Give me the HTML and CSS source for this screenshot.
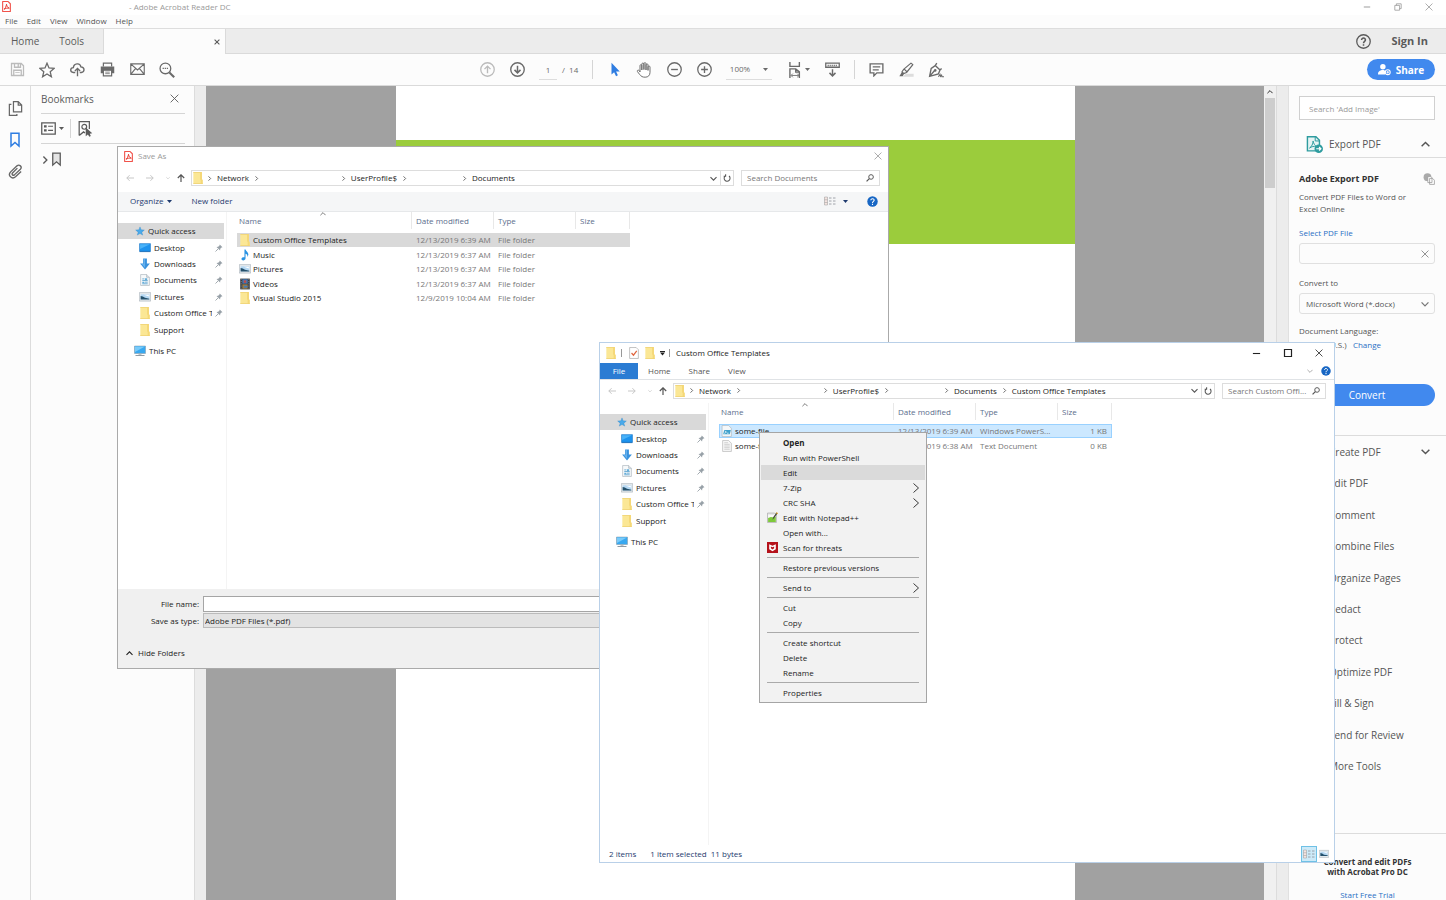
FILE: index.html
```html
<!DOCTYPE html>
<html lang="en">
<head>
  <meta charset="UTF-8" />
  <meta name="viewport" content="width=device-width, initial-scale=1" />
  <title>Adobe Acrobat Reader DC</title>
  <link rel="stylesheet" href="styles.css">
</head>
<body>

  <!-- icon sprite -->
  <svg class="sprite" aria-hidden="true">
    <symbol id="i-pdf" viewBox="0 0 18 20"><path d="M2 1h10l4 4v14H2z" fill="#fff" stroke="#f0524a" stroke-width="2" stroke-linejoin="round"/><path d="M4.500 15c2-1 4-5 4.500-9 .5 3 2 6 5 7-3-.5-7 .3-9.500 2z" fill="none" stroke="#e5352b" stroke-width="1.800"/></symbol>
    <symbol id="i-save" viewBox="0 0 20 20"><path d="M2 2h13l3 3v13H2zM6 2v5h8V2M5 18v-7h10v7M11 3v3" fill="none" stroke="#bbb" stroke-width="1.700"/><path d="M7 14h6" stroke="#bbb"/></symbol>
    <symbol id="i-star" viewBox="0 0 20 20"><path d="M10 1.500l2.500 6 6.300.5-4.800 4.200 1.500 6.300L10 15.100l-5.500 3.400L6 12.200 1.200 8l6.300-.5z" fill="none" stroke="currentColor" stroke-width="1.600"/></symbol>
    <symbol id="i-cloud" viewBox="0 0 20 20"><path d="M7 14H4.500C-.5 13.500 0 7.500 4.500 7.500 5 1.500 13.500.5 14.500 6.500c5.500.5 5.500 7 .5 7.500h-2M10 19V9M6.500 12L10 8.500l3.500 3.500" fill="none" stroke="currentColor" stroke-width="1.800"/></symbol>
    <symbol id="i-print" viewBox="0 0 20 20"><path d="M4.500 6V1.500h11V6" fill="none" stroke="currentColor" stroke-width="1.600"/><path d="M1 6h18v9h-3v-4H4v4H1z" fill="currentColor"/><path d="M4.500 11h11v7.500h-11z" fill="none" stroke="currentColor" stroke-width="1.600"/><path d="M7 13.500h6M7 15.500h6" stroke="currentColor"/></symbol>
    <symbol id="i-mail" viewBox="0 0 20 20"><path d="M1 2.500h18v14H1zM1 2.500l9 8 9-8M1 16.500l6.500-8M19 16.500l-6.500-8" fill="none" stroke="currentColor" stroke-width="1.500"/></symbol>
    <symbol id="i-find" viewBox="0 0 20 20"><circle cx="8" cy="8" r="6.700" fill="none" stroke="currentColor" stroke-width="1.600"/><path d="M13 13l6 6" stroke="currentColor" stroke-width="2.600"/><path d="M4.500 8h7" stroke="currentColor" stroke-width="1.600" stroke-dasharray="1.600 1"/></symbol>
    <symbol id="i-up" viewBox="0 0 20 20"><circle cx="10" cy="10" r="9" fill="none" stroke="#bbb" stroke-width="1.700"/><path d="M10 15V6M6 9.500l4-4 4 4" fill="none" stroke="#bbb" stroke-width="1.800"/></symbol>
    <symbol id="i-down" viewBox="0 0 20 20"><circle cx="10" cy="10" r="9" fill="none" stroke="currentColor" stroke-width="1.800"/><path d="M10 5v9M6 10.500l4 4 4-4" fill="none" stroke="currentColor" stroke-width="2"/></symbol>
    <symbol id="i-cursor" viewBox="0 0 20 20"><path d="M6 1v15.500l3.500-3 2.600 5.500 2.400-1.200-2.400-5.300H17z" fill="#2f7de1"/></symbol>
    <symbol id="i-hand" viewBox="0 0 20 20"><path d="M5 12.500V4.500c0-1.500 2.200-1.500 2.300 0V10 2.500c0-1.600 2.600-1.600 2.600 0V9.500 2c.1-1.600 2.600-1.500 2.600 0v8-6.500c.1-1.500 2.500-1.500 2.500 0V10.500 6c.2-1.400 2.500-1.400 2.500.3V13c0 3.500-2.200 6-6 6-3.500 0-5-1-7-3.500L1.800 12c-.8-1.500 1-2.500 2.200-1.300z" fill="#fff" stroke="currentColor" stroke-width="1.200" stroke-linejoin="round"/></symbol>
    <symbol id="i-minus" viewBox="0 0 20 20"><circle cx="10" cy="10" r="9" fill="none" stroke="currentColor" stroke-width="1.700"/><path d="M5.500 10h9" stroke="currentColor" stroke-width="1.800"/></symbol>
    <symbol id="i-plus" viewBox="0 0 20 20"><circle cx="10" cy="10" r="9" fill="none" stroke="currentColor" stroke-width="1.700"/><path d="M5.500 10h9M10 5.500v9" stroke="currentColor" stroke-width="1.800"/></symbol>
    <symbol id="i-fit" viewBox="0 0 20 22"><path d="M3 0v6h13V0M3 22V9.500h8l5 4V22M11 10v4h4" fill="none" stroke="currentColor" stroke-width="1.900"/><path d="M5 18.500h10M7 16l-2.500 2.500L7 21M13 16l2.500 2.500L13 21" fill="none" stroke="currentColor" stroke-width="1.200"/></symbol>
    <symbol id="i-read" viewBox="0 0 20 20"><path d="M1 1.500h18v5.500H1z" fill="none" stroke="currentColor" stroke-width="1.700"/><path d="M3.500 4.500h13" stroke="currentColor" stroke-width="2" stroke-dasharray="1.500 1.200"/><path d="M10 9.500v9M6 14.500l4 4 4-4" fill="none" stroke="currentColor" stroke-width="1.900"/></symbol>
    <symbol id="i-comment" viewBox="0 0 20 20"><path d="M1.500 2.500h17v12h-8l-4 4v-4h-5z" fill="none" stroke="currentColor" stroke-width="1.800"/><path d="M5 6.500h10M5 10.500h8" stroke="currentColor" stroke-width="1.500"/></symbol>
    <symbol id="i-marker" viewBox="0 0 20 20"><path d="M9 15.500h10.500v4H5z" fill="#ddd"/><path d="M16 1.500l2.500 2L10 14l-4 1.500L4 13l2.500-3.500zM7 9.500l3.500 3.500" fill="none" stroke="currentColor" stroke-width="1.600" stroke-linejoin="round"/><path d="M4 13l-3.500 6H5l2-4z" fill="currentColor"/></symbol>
    <symbol id="i-sign" viewBox="0 0 20 20"><path d="M9 4.500l6 5.500-2 5-11 3L4 8zM9 4.500l2-3M2 18l6-7M15 10l2-2" fill="none" stroke="currentColor" stroke-width="1.700"/><circle cx="9" cy="10.500" r="1.600" fill="currentColor"/><path d="M13 18.500l2-3 .6 2.500 1.400-1.500.5 2H20" fill="none" stroke="currentColor" stroke-width="1.400"/></symbol>
    <symbol id="i-tri" viewBox="0 0 10 6"><path d="M0 0h10L5 6z" fill="currentColor"/></symbol>
    <symbol id="i-x" viewBox="0 0 10 10"><path d="M.7.7l8.600 8.600M9.300.7L.7 9.300" stroke="currentColor" fill="none"/></symbol>
    <symbol id="i-xbold" viewBox="0 0 10 10"><path d="M1 1l8 8M9 1L1 9" stroke="currentColor" stroke-width="1.800" fill="none"/></symbol>
    <symbol id="i-line" viewBox="0 0 10 10"><path d="M1 5h8" stroke="currentColor" stroke-width="1.200"/></symbol>
    <symbol id="i-restore" viewBox="0 0 10 10"><path d="M1 3h6v6H1zM3 3V1h6v6H7" fill="none" stroke="currentColor"/></symbol>
    <symbol id="i-max" viewBox="0 0 10 10"><path d="M1.500 1.500h7v7h-7z" fill="none" stroke="currentColor" stroke-width="1.200"/></symbol>
    <symbol id="i-chev-r" viewBox="0 0 10 10"><path d="M3 .7L7.300 5 3 9.300" fill="none" stroke="currentColor" stroke-width="1.700"/></symbol>
    <symbol id="i-more" viewBox="0 0 10 10"><path d="M2.500 .5L7.500 5l-5 4.500" fill="none" stroke="currentColor" stroke-width=".9"/></symbol>
    <symbol id="i-chev-d" viewBox="0 0 10 10"><path d="M.7 3L5 7.300 9.300 3" fill="none" stroke="currentColor" stroke-width="1.600"/></symbol>
    <symbol id="i-chev-u" viewBox="0 0 10 10"><path d="M.7 7L5 2.700 9.300 7" fill="none" stroke="currentColor" stroke-width="1.600"/></symbol>
    <symbol id="i-arr-l" viewBox="0 0 10 10"><path d="M10 5H1M4.500 1.500L1 5l3.500 3.500" fill="none" stroke="currentColor" stroke-width="1.200"/></symbol>
    <symbol id="i-arr-r" viewBox="0 0 10 10"><path d="M0 5h9M5.500 1.500L9 5 5.500 8.500" fill="none" stroke="currentColor" stroke-width="1.200"/></symbol>
    <symbol id="i-arr-u" viewBox="0 0 10 10"><path d="M5 10V1M1 5l4-4 4 4" fill="none" stroke="currentColor" stroke-width="1.500"/></symbol>
    <symbol id="i-refresh" viewBox="0 0 10 10"><path d="M7.500 2.500A3.700 3.700 0 1 1 3 2.300M3.300.3v2.500H.8" fill="none" stroke="currentColor" stroke-width="1.300"/></symbol>
    <symbol id="i-lens" viewBox="0 0 10 10"><circle cx="6.300" cy="3.700" r="2.900" fill="none" stroke="currentColor" stroke-width="1.200"/><path d="M4.200 5.800L.7 9.300" stroke="currentColor" stroke-width="1.500"/></symbol>
    <symbol id="i-help" viewBox="0 0 20 20"><circle cx="10" cy="10" r="9.500" fill="#1766c4"/><path d="M7 7.800c0-4 6.200-3.600 6 0-.1 2-3 2.200-3 4.700M10 14v2.400" fill="none" stroke="#fff" stroke-width="2"/></symbol>
    <symbol id="i-helpline" viewBox="0 0 20 20"><circle cx="10" cy="10" r="9" fill="none" stroke="currentColor" stroke-width="1.700"/><path d="M7.400 8c0-3.500 5.300-3.200 5.200 0-.1 1.800-2.600 2-2.600 4.200M10 13.600v2" fill="none" stroke="currentColor" stroke-width="2"/></symbol>
    <symbol id="i-person" viewBox="0 0 24 22"><circle cx="9" cy="6" r="5" fill="#fff"/><path d="M0 20c0-6 4-7 7-8h4l3 2-1 6z" fill="#fff"/><circle cx="18" cy="16" r="4.500" fill="none" stroke="#fff" stroke-width="2"/><path d="M15.500 16h5M18 13.500v5" stroke="#fff" stroke-width="1.600"/></symbol>
    <symbol id="i-pages" viewBox="0 0 20 22"><path d="M7 1h7l5 5v10H7zM14 1v5h5M4 5H1v16h11v-2" fill="none" stroke="currentColor" stroke-width="1.800"/></symbol>
    <symbol id="i-mark" viewBox="0 0 14 20"><path d="M2 1.500h10v16l-5-4.500-5 4.500z" fill="none" stroke="currentColor" stroke-width="1.900"/></symbol>
    <symbol id="i-node" viewBox="0 0 14 20"><path d="M2 1.500h10v16l-5-4.500-5 4.500z" fill="#e4e4e4" stroke="currentColor" stroke-width="1.700"/></symbol>
    <symbol id="i-clip" viewBox="0 0 20 20"><path d="M12.500 5.500L6 12c-1.500 2 .8 4 2.500 2.500L16.500 7c3-3.500-1.500-7-4.500-4.500L3.500 10.500c-4.500 5 2 10.500 6.500 6.500l7.500-7" fill="none" stroke="currentColor" stroke-width="1.800"/></symbol>
    <symbol id="i-options" viewBox="0 0 20 18"><path d="M1 1.500h18v15H1z" fill="none" stroke="currentColor" stroke-width="1.700"/><path d="M4 6h3.500M4 11.500h3.500" stroke="currentColor" stroke-width="3"/><path d="M9.500 6H16M9.500 11.500H16" stroke="currentColor" stroke-width="1.600"/></symbol>
    <symbol id="i-findmark" viewBox="0 0 20 22"><path d="M2 20V1h14v10M2 20l6-5 2 1.500" fill="none" stroke="currentColor" stroke-width="1.700"/><circle cx="9" cy="8" r="3.300" fill="none" stroke="currentColor" stroke-width="1.600"/><path d="M11 9v12l3-2.500 2 3 2-1-1.500-3L20 17z" fill="currentColor"/></symbol>
    <symbol id="i-export" viewBox="0 0 24 24"><path d="M2 1h12l5 5v15H2z" fill="#e6f4f4" stroke="#2e9c9f" stroke-width="2"/><path d="M13 1v6h6M5 17c3-2 5-6 5-10 1 4 2 6 5 8-4-1-7 0-10 2z" fill="none" stroke="#2e9c9f" stroke-width="1.400"/><circle cx="18" cy="18" r="6" fill="#2e9c9f"/><path d="M14.500 18h6M18.500 15.500L21 18l-2.500 2.500" fill="none" stroke="#fff" stroke-width="1.700"/></symbol>
    <symbol id="i-cloudpages" viewBox="0 0 20 20"><circle cx="7.500" cy="7" r="6.500" fill="#aaa"/><path d="M8 6h5l2 2v8H8zM11 9h5l3 3v7h-8z" fill="#fff" stroke="#999" stroke-width="1.300"/></symbol>
    <symbol id="i-folder" viewBox="1 1 14 18"><path d="M1 1h13v11l1 1v6H1z" fill="#fbe795"/><path d="M14 2v10l1 1.500V19h-3v-6l-1-1V1h3z" fill="#f5d878"/><path d="M1 1h11v1H1zM1 18h14v1H1z" fill="#efd274"/></symbol>
    <symbol id="i-quick" viewBox="-1 -1 22 22"><path d="M10 1l2.500 6.500 7 .5-5.500 4.500 2 6.500-6-3.500L4 19l2-6.500L.5 8l7-.5z" fill="#4aaaea" stroke="#2f87cb" stroke-width=".8"/></symbol>
    <symbol id="i-desktop" viewBox="0 0 22 18"><path d="M1 1h20v14H1z" fill="#1d93ee" stroke="#1271c4"/><path d="M2 2h18L2 11z" fill="#49b2f8"/><path d="M1 15h20v1.500H1z" fill="#0d65b4"/></symbol>
    <symbol id="i-dl" viewBox="0 0 20 22"><path d="M6.500 1h7v9H19l-9 11L1 10h5.500z" fill="#3a93de"/><path d="M7.500 2H10v16L4 11h3.500z" fill="#65b0ec"/></symbol>
    <symbol id="i-doc" viewBox="0 0 18 22"><path d="M1 1h11l5 5v15H1z" fill="#f7f9fa" stroke="#9aa5ad"/><path d="M12 1v5h5" fill="#dde3e7" stroke="#9aa5ad"/><path d="M4 9h4M4 12h10M9 15h5M4 18h10" stroke="#4e9ccb" stroke-width="1.500"/><path d="M4 14h4v3H4zM9 8h4v3H9z" fill="#63aeda"/></symbol>
    <symbol id="i-pic" viewBox="0 0 22 18"><path d="M.5 1h21v15.500H.5z" fill="#e8ecef" stroke="#98a3ab"/><path d="M3 4h16v9.500H3z" fill="#b5d8f3"/><path d="M3 7l4 1 4 2.500 8 1.500v1.500H3z" fill="#24506b"/><path d="M9 5h9v3z" fill="#fff"/></symbol>
    <symbol id="i-music" viewBox="0 0 16 22"><path d="M7 1h2c1 4 6 5 5 10-.3 1.500-1 2.500-2 3.500 1-4-.5-5.500-3-6V17c0 5-8 5-7.500 1 .3-2.500 3-3.500 5.500-2.700z" fill="#2a93e3"/></symbol>
    <symbol id="i-video" viewBox="0 0 20 20"><path d="M2 1h16v18H2z" fill="#34383c"/><path d="M5.500 2h9v7.500h-9z" fill="#4478b4"/><path d="M5.500 10.500h9V18h-9z" fill="#9a7c45"/><path d="M8 4h4v4H8z" fill="#c14a43"/><path d="M8 13h6v3H8z" fill="#3e79bd"/><path d="M3.700 2v16M16.300 2v16" stroke="#bbb" stroke-width="1" stroke-dasharray="1.500 1.500"/></symbol>
    <symbol id="i-pc" viewBox="0 0 24 22"><path d="M1 1h22v15H1z" fill="#38a8f0" stroke="#8494a0"/><path d="M2 2h20L2 13z" fill="#79cbfa"/><path d="M9 16h6v2.500H9z" fill="#a7b0b7"/><path d="M3 20h18" stroke="#8f9ba4" stroke-width="2"/></symbol>
    <symbol id="i-pin" viewBox="0 0 16 16"><path d="M9.500 1L15 6.500l-2 .6-2.500 2.500-.3 3.400L3 5.800l3.400-.3L9 3z" fill="#98a1a8"/><path d="M6 10l-5 5" stroke="#98a1a8" stroke-width="1.800"/></symbol>
    <symbol id="i-ps" viewBox="0 0 20 22"><path d="M1 1h12l5 5v15H1z" fill="#f5f8fa" stroke="#a0aab0"/><path d="M5 9h12l-2 8H3z" fill="#3fa1cc"/><path d="M6 11l3 2-4 2.500M10 15h3" fill="none" stroke="#fff" stroke-width="1.300"/></symbol>
    <symbol id="i-txt" viewBox="0 0 18 22"><path d="M1 1h11l5 5v15H1z" fill="#f7f7f7" stroke="#a5a5a5"/><path d="M4 5h7M4 8h10M4 11h10M4 14h10M4 17h10" stroke="#b4b4b4"/></symbol>
    <symbol id="i-check" viewBox="0 0 18 22"><path d="M1 1h12l4 4v16H1z" fill="#fff" stroke="#909090"/><path d="M4.500 11l3.500 4 6-8" fill="none" stroke="#e0643c" stroke-width="2.200"/></symbol>
    <symbol id="i-npp" viewBox="0 0 20 20"><path d="M1 2h13l3 3v14H1z" fill="#fafafa" stroke="#8b8b8b"/><path d="M2 11l5-2 5 1 4-2v10H2z" fill="#7ec93b"/><path d="M3 4h9" stroke="#999" stroke-dasharray="1 1"/><path d="M10 14l1-4 6-9 2 1.500-6 8.500z" fill="#4a4a3d"/><path d="M16 2l1-1.500 3 1.500-1 2z" fill="#e2a72e"/></symbol>
    <symbol id="i-shield" viewBox="0 0 20 20"><path d="M0 0h20v20H0z" fill="#b5121b"/><path d="M4 4l6 3 6-3v9l-6 4-6-4z" fill="#fff"/><path d="M7 8l3 1.500L13 8v3.500l-3 2-3-2z" fill="#b5121b"/></symbol>
    <symbol id="i-views" viewBox="0 0 24 18"><path d="M1 1h6v16H1zM1 6.500h6M1 12h6" fill="#f4e3e0" stroke="#999"/><path d="M10 3h5M18 3h5M10 9h5M18 9h5M10 15h5M18 15h5" stroke="#8a9097" stroke-width="1.600"/></symbol>
  </svg>

  <header class="titlebar">
    <svg class="ic11"><use href="#i-pdf"/></svg>
    <span class="app-title">- Adobe Acrobat Reader DC</span>
    <div class="caption">
      <button aria-label="Minimize"><svg class="ic8"><use href="#i-line"/></svg></button>
      <button aria-label="Restore"><svg class="ic8"><use href="#i-restore"/></svg></button>
      <button aria-label="Close"><svg class="ic8"><use href="#i-x"/></svg></button>
    </div>
  </header>

  <nav class="menubar">
    <button>File</button><button>Edit</button><button>View</button><button>Window</button><button>Help</button>
  </nav>

  <div class="tabbar">
    <button class="tab home">Home</button>
    <button class="tab">Tools</button>
    <div class="tab-doc"><button aria-label="Close tab"><svg class="ic6"><use href="#i-xbold"/></svg></button></div>
    <div class="account">
      <button aria-label="Help"><svg class="ic15"><use href="#i-helpline"/></svg></button>
      <button class="sign-in">Sign In</button>
    </div>
  </div>

  <div class="toolbar">
    <button aria-label="Save"><svg class="ic15"><use href="#i-save"/></svg></button>
    <button aria-label="Star"><svg class="ic16"><use href="#i-star"/></svg></button>
    <button aria-label="Upload"><svg class="ic15"><use href="#i-cloud"/></svg></button>
    <button aria-label="Print"><svg class="ic15"><use href="#i-print"/></svg></button>
    <button aria-label="Email"><svg class="ic15"><use href="#i-mail"/></svg></button>
    <button aria-label="Find"><svg class="ic16"><use href="#i-find"/></svg></button>
    <div class="tool-mid">
      <button aria-label="Previous page"><svg class="ic15"><use href="#i-up"/></svg></button>
      <button aria-label="Next page"><svg class="ic15"><use href="#i-down"/></svg></button>
      <input class="page-no" type="text" value="1" aria-label="Page number">
      <span class="page-total">/&nbsp; 14</span>
      <span class="divider"></span>
      <button aria-label="Select"><svg class="ic15"><use href="#i-cursor"/></svg></button>
      <button aria-label="Pan"><svg class="ic16"><use href="#i-hand"/></svg></button>
      <button aria-label="Zoom out"><svg class="ic15"><use href="#i-minus"/></svg></button>
      <button aria-label="Zoom in"><svg class="ic15"><use href="#i-plus"/></svg></button>
      <button class="zoom">100% <svg class="tri"><use href="#i-tri"/></svg></button>
      <button class="fit" aria-label="Fit page"><svg class="ic16"><use href="#i-fit"/></svg><svg class="tri"><use href="#i-tri"/></svg></button>
      <button aria-label="Read mode"><svg class="ic15"><use href="#i-read"/></svg></button>
      <span class="divider"></span>
      <button aria-label="Comment"><svg class="ic15"><use href="#i-comment"/></svg></button>
      <button aria-label="Highlight"><svg class="ic15"><use href="#i-marker"/></svg></button>
      <button aria-label="Sign"><svg class="ic16"><use href="#i-sign"/></svg></button>
    </div>
    <button class="share"><svg class="ic13"><use href="#i-person"/></svg> Share</button>
  </div>

  <main class="workspace">
    <div class="rail">
      <button aria-label="Page thumbnails"><svg class="ic15"><use href="#i-pages"/></svg></button>
      <button class="on" aria-label="Bookmarks"><svg class="ic16"><use href="#i-mark"/></svg></button>
      <button aria-label="Attachments"><svg class="ic15"><use href="#i-clip"/></svg></button>
    </div>
    <aside class="bookmarks">
      <div class="bm-head"><h2>Bookmarks</h2><button aria-label="Close panel"><svg class="ic9"><use href="#i-x"/></svg></button></div>
      <div class="bm-tools">
        <button class="bm-options" aria-label="Options"><svg class="ic15"><use href="#i-options"/></svg><svg class="tri"><use href="#i-tri"/></svg></button>
        <button class="bm-find" aria-label="Find bookmark"><svg class="ic16"><use href="#i-findmark"/></svg></button>
      </div>
      <div class="bm-tree"><svg class="ic8"><use href="#i-chev-r"/></svg><svg class="ic15"><use href="#i-node"/></svg></div>
    </aside>
    <div class="splitter"></div>
    <section class="viewer"><div class="page"><div class="band"></div></div></section>
    <div class="scrollbar"><svg class="ic6"><use href="#i-chev-u"/></svg><span class="thumb"></span></div>
    <div class="splitter"></div>

    <aside class="tools">
      <input class="tool-search" type="text" placeholder="Search 'Add Image'" aria-label="Search tools">
      <button class="tool-head"><svg class="ic17"><use href="#i-export"/></svg>Export PDF<svg class="ic9 end"><use href="#i-chev-u"/></svg></button>
      <div class="export">
        <h3>Adobe Export PDF <svg class="ic12"><use href="#i-cloudpages"/></svg></h3>
        <p>Convert PDF Files to Word or<br>Excel Online</p>
        <label class="link" for="pdf-file">Select PDF File</label>
        <div class="field">
          <input id="pdf-file" type="text">
          <svg class="ic8"><use href="#i-x"/></svg>
        </div>
        <label for="convert-to">Convert to</label>
        <div class="field">
          <select id="convert-to"><option>Microsoft Word (*.docx)</option></select>
          <svg class="ic8"><use href="#i-chev-d"/></svg>
        </div>
        <p class="lang">Document Language:<br>English (U.S.) &nbsp; <a class="link" href="#">Change</a></p>
        <button class="convert">Convert</button>
      </div>
      <ul class="tool-list">
        <li>Create PDF <svg class="ic9 end"><use href="#i-chev-d"/></svg></li>
        <li>Edit PDF</li>
        <li>Comment</li>
        <li>Combine Files</li>
        <li>Organize Pages</li>
        <li>Redact</li>
        <li>Protect</li>
        <li>Optimize PDF</li>
        <li>Fill &amp; Sign</li>
        <li>Send for Review</li>
        <li>More Tools</li>
      </ul>
      <div class="promo">
        <strong>Convert and edit PDFs<br>with Acrobat Pro DC</strong>
        <a class="link" href="#">Start Free Trial</a>
      </div>
    </aside>
  </main>

  <!-- Save As dialog -->
  <section class="window save-as">
    <div class="save-title">
      <svg class="ic11"><use href="#i-pdf"/></svg> Save As
      <button class="end" aria-label="Close"><svg class="ic8"><use href="#i-x"/></svg></button>
    </div>
    <div class="nav-row">
      <button class="dim" aria-label="Back"><svg class="ic8"><use href="#i-arr-l"/></svg></button>
      <button class="dim" aria-label="Forward"><svg class="ic8"><use href="#i-arr-r"/></svg></button>
      <button class="dim recent" aria-label="Recent"><svg class="ic4"><use href="#i-chev-d"/></svg></button>
      <button aria-label="Up"><svg class="ic8"><use href="#i-arr-u"/></svg></button>
      <div class="address">
        <svg class="ic12"><use href="#i-folder"/></svg>
        <svg class="sep"><use href="#i-chev-r"/></svg><span>Network</span>
        <svg class="sep"><use href="#i-chev-r"/></svg><span class="blank-wide"></span>
        <svg class="sep"><use href="#i-chev-r"/></svg><span>UserProfile$</span>
        <svg class="sep"><use href="#i-chev-r"/></svg><span class="blank"></span>
        <svg class="sep"><use href="#i-chev-r"/></svg><span>Documents</span>
        <svg class="ic7 end"><use href="#i-chev-d"/></svg>
        <button class="refresh" aria-label="Refresh"><svg class="ic8"><use href="#i-refresh"/></svg></button>
      </div>
      <div class="search"><input type="text" placeholder="Search Documents" aria-label="Search Documents"><svg class="ic8"><use href="#i-lens"/></svg></div>
    </div>
    <div class="commands">
      <button>Organize <svg class="tri"><use href="#i-tri"/></svg></button>
      <button>New folder</button>
      <button class="end" aria-label="View"><svg class="ic12"><use href="#i-views"/></svg><svg class="tri"><use href="#i-tri"/></svg></button>
      <button aria-label="Help"><svg class="ic11"><use href="#i-help"/></svg></button>
    </div>
    <div class="files">
      <nav class="places">
        <ul>
          <li class="root on"><svg class="ic10"><use href="#i-quick"/></svg>Quick access</li>
          <li><svg class="ic12"><use href="#i-desktop"/></svg><span>Desktop</span><svg class="pin"><use href="#i-pin"/></svg></li>
          <li><svg class="ic12"><use href="#i-dl"/></svg><span>Downloads</span><svg class="pin"><use href="#i-pin"/></svg></li>
          <li><svg class="ic12"><use href="#i-doc"/></svg><span>Documents</span><svg class="pin"><use href="#i-pin"/></svg></li>
          <li><svg class="ic12"><use href="#i-pic"/></svg><span>Pictures</span><svg class="pin"><use href="#i-pin"/></svg></li>
          <li><svg class="ic12"><use href="#i-folder"/></svg><span>Custom Office T</span><svg class="pin"><use href="#i-pin"/></svg></li>
          <li><svg class="ic12"><use href="#i-folder"/></svg><span>Support</span></li>
        </ul>
        <div class="root pc"><svg class="ic12"><use href="#i-pc"/></svg>This PC</div>
      </nav>
      <div class="listing">
        <svg class="sort"><use href="#i-chev-u"/></svg>
        <table>
          <thead><tr><th class="c-name"><div>Name</div></th><th class="c-date"><div>Date modified</div></th><th class="c-type"><div>Type</div></th><th class="c-size"><div>Size</div></th></tr></thead>
          <tbody>
            <tr class="picked"><td><svg class="ic12"><use href="#i-folder"/></svg>Custom Office Templates</td><td>12/13/2019 6:39 AM</td><td>File folder</td><td></td></tr>
            <tr><td><svg class="ic12"><use href="#i-music"/></svg>Music</td><td>12/13/2019 6:37 AM</td><td>File folder</td><td></td></tr>
            <tr><td><svg class="ic12"><use href="#i-pic"/></svg>Pictures</td><td>12/13/2019 6:37 AM</td><td>File folder</td><td></td></tr>
            <tr><td><svg class="ic12"><use href="#i-video"/></svg>Videos</td><td>12/13/2019 6:37 AM</td><td>File folder</td><td></td></tr>
            <tr><td><svg class="ic12"><use href="#i-folder"/></svg>Visual Studio 2015</td><td>12/9/2019 10:04 AM</td><td>File folder</td><td></td></tr>
          </tbody>
        </table>
      </div>
    </div>
    <div class="save-form">
      <label for="file-name">File name:</label><input id="file-name" type="text">
      <label for="file-type">Save as type:</label><select id="file-type"><option>Adobe PDF Files (*.pdf)</option></select>
      <button class="hide-folders"><svg class="ic7"><use href="#i-chev-u"/></svg> Hide Folders</button>
    </div>
  </section>

  <!-- Explorer window -->
  <section class="window explorer">
    <div class="exp-title">
      <svg class="ic12"><use href="#i-folder"/></svg><span class="bar"></span>
      <svg class="ic12"><use href="#i-check"/></svg><svg class="ic12"><use href="#i-folder"/></svg>
      <svg class="qat"><use href="#i-tri"/></svg><span class="bar"></span>
      <span>Custom Office Templates</span>
      <div class="caption">
        <button aria-label="Minimize"><svg class="ic9"><use href="#i-line"/></svg></button>
        <button aria-label="Maximize"><svg class="ic10"><use href="#i-max"/></svg></button>
        <button aria-label="Close"><svg class="ic8"><use href="#i-x"/></svg></button>
      </div>
    </div>
    <div class="ribbon">
      <button class="file">File</button><button>Home</button><button>Share</button><button>View</button>
      <svg class="ic6 end"><use href="#i-chev-d"/></svg>
      <button class="ribbon-help" aria-label="Help"><svg class="ic10"><use href="#i-help"/></svg></button>
    </div>
    <div class="nav-row">
      <button class="dim" aria-label="Back"><svg class="ic8"><use href="#i-arr-l"/></svg></button>
      <button class="dim" aria-label="Forward"><svg class="ic8"><use href="#i-arr-r"/></svg></button>
      <button class="dim recent" aria-label="Recent"><svg class="ic4"><use href="#i-chev-d"/></svg></button>
      <button aria-label="Up"><svg class="ic8"><use href="#i-arr-u"/></svg></button>
      <div class="address">
        <svg class="ic12"><use href="#i-folder"/></svg>
        <svg class="sep"><use href="#i-chev-r"/></svg><span>Network</span>
        <svg class="sep"><use href="#i-chev-r"/></svg><span class="blank-wide"></span>
        <svg class="sep"><use href="#i-chev-r"/></svg><span>UserProfile$</span>
        <svg class="sep"><use href="#i-chev-r"/></svg><span class="blank"></span>
        <svg class="sep"><use href="#i-chev-r"/></svg><span>Documents</span>
        <svg class="sep"><use href="#i-chev-r"/></svg><span>Custom Office Templates</span>
        <svg class="ic7 end"><use href="#i-chev-d"/></svg>
        <button class="refresh" aria-label="Refresh"><svg class="ic8"><use href="#i-refresh"/></svg></button>
      </div>
      <div class="search"><input type="text" placeholder="Search Custom Offi..." aria-label="Search Custom Office Templates"><svg class="ic8"><use href="#i-lens"/></svg></div>
    </div>
    <div class="files">
      <nav class="places">
        <ul>
          <li class="root on"><svg class="ic10"><use href="#i-quick"/></svg>Quick access</li>
          <li><svg class="ic12"><use href="#i-desktop"/></svg><span>Desktop</span><svg class="pin"><use href="#i-pin"/></svg></li>
          <li><svg class="ic12"><use href="#i-dl"/></svg><span>Downloads</span><svg class="pin"><use href="#i-pin"/></svg></li>
          <li><svg class="ic12"><use href="#i-doc"/></svg><span>Documents</span><svg class="pin"><use href="#i-pin"/></svg></li>
          <li><svg class="ic12"><use href="#i-pic"/></svg><span>Pictures</span><svg class="pin"><use href="#i-pin"/></svg></li>
          <li><svg class="ic12"><use href="#i-folder"/></svg><span>Custom Office T</span><svg class="pin"><use href="#i-pin"/></svg></li>
          <li><svg class="ic12"><use href="#i-folder"/></svg><span>Support</span></li>
        </ul>
        <div class="root pc"><svg class="ic12"><use href="#i-pc"/></svg>This PC</div>
      </nav>
      <div class="listing">
        <svg class="sort"><use href="#i-chev-u"/></svg>
        <table>
          <thead><tr><th class="c-name"><div>Name</div></th><th class="c-date"><div>Date modified</div></th><th class="c-type"><div>Type</div></th><th class="c-size"><div>Size</div></th></tr></thead>
          <tbody>
            <tr class="selected"><td><svg class="ic12"><use href="#i-ps"/></svg>some-file</td><td>12/13/2019 6:39 AM</td><td>Windows PowerS...</td><td>1 KB</td></tr>
            <tr><td><svg class="ic12"><use href="#i-txt"/></svg>some-file</td><td>12/13/2019 6:38 AM</td><td>Text Document</td><td>0 KB</td></tr>
          </tbody>
        </table>
      </div>
    </div>
    <footer class="status">
      <span>2 items</span><span>1 item selected &nbsp;11 bytes</span>
      <button class="view-on end" aria-label="Details"><svg class="ic12"><use href="#i-views"/></svg></button>
      <button aria-label="Thumbnails"><svg class="ic10"><use href="#i-pic"/></svg></button>
    </footer>
  </section>

  <!-- Context menu -->
  <div class="context-menu">
    <button class="default">Open</button>
    <button>Run with PowerShell</button>
    <button class="hover">Edit</button>
    <button>7-Zip<svg class="more"><use href="#i-more"/></svg></button>
    <button>CRC SHA<svg class="more"><use href="#i-more"/></svg></button>
    <button><svg class="menu-icon"><use href="#i-npp"/></svg>Edit with Notepad++</button>
    <button>Open with...</button>
    <button><svg class="menu-icon"><use href="#i-shield"/></svg>Scan for threats</button>
    <hr>
    <button>Restore previous versions</button>
    <hr>
    <button>Send to<svg class="more"><use href="#i-more"/></svg></button>
    <hr>
    <button>Cut</button>
    <button>Copy</button>
    <hr>
    <button>Create shortcut</button>
    <button>Delete</button>
    <button>Rename</button>
    <hr>
    <button>Properties</button>
  </div>

</body>
</html>
```
FILE: styles.css
```css
* {
  box-sizing: border-box;
}

body {
  margin: 0;
  height: 100vh;
  display: flex;
  flex-direction: column;
  overflow: hidden;
  position: relative;
  background: #fcfcfc;
  color: #222;
  font-family: "Open Sans", "Noto Sans", sans-serif;
  font-size: 8px;
  line-height: 12px;
}

button, input, select {
  font: inherit;
  color: inherit;
  border: none;
  background: none;
  padding: 0;
  margin: 0;
  border-radius: 0;
  appearance: none;
}

button {
  display: flex;
  align-items: center;
  flex: none;
}

h2, h3, p, ul {
  margin: 0;
  padding: 0;
  list-style: none;
}

svg {
  flex: none;
  display: block;
}

.sprite {
  position: absolute;
  width: 0;
  height: 0;
}

.ic4 { width: 4px; height: 4px; }
.ic6 { width: 6px; height: 6px; }
.ic7 { width: 7px; height: 7px; }
.ic8 { width: 8px; height: 8px; }
.ic9 { width: 9px; height: 9px; }
.ic10 { width: 10px; height: 10px; }
.ic11 { width: 11px; height: 11px; }
.ic12 { width: 12px; height: 12px; }
.ic13 { width: 13px; height: 13px; }
.ic15 { width: 15px; height: 15px; }
.ic16 { width: 16px; height: 16px; }
.ic17 { width: 17px; height: 17px; }
.tri { width: 5px; height: 3px; }
.end { margin-left: auto; }

.link {
  color: #2a6fc4;
  text-decoration: none;
}

/* application frame */

.titlebar {
  height: 15px;
  display: flex;
  align-items: center;
  padding: 0 0 2px 1px;
  background: #fff;
  color: #999;
}

.app-title {
  margin-left: 117px;
}

.caption {
  margin-left: auto;
  display: flex;
}

.caption button {
  width: 31px;
  justify-content: center;
}

.titlebar .caption {
  margin-right: 2px;
}

.menubar {
  height: 14px;
  display: flex;
  align-items: center;
  gap: 9px;
  padding: 0 0 1px 5px;
  border-bottom: 1px solid #ddd;
  color: #555;
}

.tabbar {
  height: 25px;
  display: flex;
  background: #ececec;
  border-bottom: 1px solid #dadada;
  font-size: 10px;
  color: #5a5a5a;
}

.tab {
  padding-left: 20px;
}

.tab.home {
  padding-left: 11px;
}

.tab-doc {
  width: 123px;
  height: 25px;
  margin-left: 19px;
  padding-right: 5px;
  display: flex;
  align-items: center;
  justify-content: flex-end;
  background: #fcfcfc;
  border-left: 1px solid #dadada;
  border-right: 1px solid #dadada;
}

.account {
  display: flex;
  gap: 20px;
  margin-left: auto;
  padding-right: 18px;
}

.sign-in {
  font-size: 11px;
  font-weight: 700;
}

.toolbar {
  height: 32px;
  display: flex;
  align-items: center;
  padding: 0 11px 0 2px;
  border-bottom: 1px solid #dadada;
  color: #6a6a6a;
}

.toolbar button {
  width: 30px;
  justify-content: center;
}

.tool-mid {
  display: flex;
  align-items: center;
  margin-left: 290px;
}

.page-no {
  width: 18px;
  height: 20px;
  margin-left: 7px;
  text-align: center;
  border-bottom: 1px solid #ddd;
}

.page-total {
  width: 28px;
  padding-left: 5px;
}

.divider {
  width: 1px;
  height: 19px;
  margin: 0 6px 0 7px;
  background: #d5d5d5;
}

.toolbar .zoom {
  width: 46px;
  height: 20px;
  margin: 0 7px;
  gap: 13px;
  border-bottom: 1px solid #ddd;
}

.toolbar .fit {
  width: 38px;
  gap: 2px;
}

.toolbar .share {
  width: 68px;
  height: 21px;
  margin-left: auto;
  gap: 5px;
  border-radius: 11px;
  background: #4189ee;
  color: #fff;
  font-size: 10px;
  font-weight: 700;
}

.workspace {
  flex: 1;
  min-height: 0;
  display: flex;
}

.rail {
  width: 31px;
  padding-top: 15px;
  display: flex;
  flex-direction: column;
  align-items: center;
  gap: 16px;
  border-right: 1px solid #dcdcdc;
  color: #666;
}

.rail .on {
  color: #2f7de1;
}

.bookmarks {
  width: 163px;
  padding: 0 9px 0 10px;
  color: #5a5a5a;
}

.bm-head {
  height: 28px;
  display: flex;
  align-items: center;
  justify-content: space-between;
  padding: 0 6px 2px 0;
  border-bottom: 1px solid #d5d5d5;
}

.bm-head h2 {
  font-size: 10px;
  font-weight: 400;
}

.bm-tools {
  height: 30px;
  display: flex;
  align-items: center;
  border-bottom: 1px solid #d5d5d5;
}

.bm-options {
  gap: 3px;
  height: 19px;
  padding-right: 6px;
  border-right: 1px solid #d5d5d5;
}

.bm-find {
  margin-left: 6px;
}

.bm-tree {
  height: 31px;
  display: flex;
  align-items: center;
}

.splitter {
  width: 12px;
  background: #ececec;
  border-left: 1px solid #dcdcdc;
}

.viewer {
  flex: 1;
  padding: 0 189px 0 190px;
  background: #a1a1a1;
}

.page {
  height: 100%;
  padding-top: 54px;
  background: #fff;
}

.band {
  height: 104px;
  background: #9bcc3c;
}

.scrollbar {
  width: 12px;
  display: flex;
  flex-direction: column;
  align-items: center;
  padding-top: 3px;
  gap: 3px;
  background: #f0f0f0;
}

.thumb {
  width: 10px;
  height: 90px;
  background: #cdcdcd;
}

.tools {
  width: 158px;
  display: flex;
  flex-direction: column;
  border-left: 1px solid #e0e0e0;
  color: #555;
}

.tool-search {
  height: 24px;
  margin: 10px 11px 11px 10px;
  padding: 0 9px;
  background: #fff;
  border: 1px solid #d0d0d0;
}

.tool-search::placeholder {
  color: #999;
}

.tool-head {
  height: 27px;
  padding: 0 16px 0 17px;
  gap: 6px;
  border-bottom: 1px solid #dcdcdc;
  font-size: 10px;
}

.export {
  display: flex;
  flex-direction: column;
  padding: 15px 11px 29px 10px;
  border-bottom: 1px solid #dcdcdc;
}

.export h3 {
  display: flex;
  justify-content: space-between;
  margin-bottom: 6px;
  font-size: 9px;
  color: #333;
}

.export p {
  margin-bottom: 12px;
}

.field {
  position: relative;
  display: flex;
  margin: 4px 0 13px;
}

.field input,
.field select {
  flex: 1;
  min-width: 0;
  height: 21px;
  padding: 0 6px;
  border: 1px solid #e0e0e0;
  border-radius: 3px;
}

.field svg {
  position: absolute;
  right: 6px;
  top: 7px;
  color: #777;
}

.export .lang {
  margin: -3px 0 32px;
  line-height: 14px;
}

.convert {
  height: 22px;
  justify-content: center;
  border-radius: 11px;
  background: #4189ee;
  color: #fff;
  font-size: 10px;
}

.tool-list {
  height: 346px;
  display: grid;
  grid-auto-rows: 1fr;
  padding: 0 16px 0 40px;
  font-size: 10px;
}

.tool-list li {
  display: flex;
  align-items: center;
  white-space: nowrap;
}

.promo {
  flex: none;
  height: 67px;
  margin-top: auto;
  padding-top: 23px;
  display: flex;
  flex-direction: column;
  align-items: center;
  gap: 12px;
  border-top: 1px solid #dcdcdc;
  text-align: center;
}

.promo strong {
  line-height: 10px;
  color: #333;
}

/* floating windows */

.window {
  position: absolute;
  display: flex;
  flex-direction: column;
  background: #fff;
}

.save-as {
  left: 117px;
  top: 146px;
  width: 772px;
  height: 523px;
  border: 1px solid #aaa;
}

.save-title {
  height: 19px;
  display: flex;
  align-items: center;
  gap: 4px;
  padding: 0 6px 1px 5px;
  color: #999;
}

.nav-row {
  height: 26px;
  display: flex;
  align-items: center;
  padding: 0 8px 2px;
  color: #555;
}

.nav-row > button {
  width: 20px;
  justify-content: flex-start;
}

.nav-row .dim {
  color: #c4c4c4;
}

.nav-row > .recent {
  width: 11px;
}

.nav-row > button:nth-child(4) {
  width: 14px;
}

.address {
  flex: 1;
  height: 16px;
  display: flex;
  align-items: center;
  border: 1px solid #ddd;
}

.address span {
  color: #222;
}

.address > svg:first-child {
  margin-right: -2px;
}

.address .sep {
  width: 5px;
  height: 5px;
  margin: 0 5px;
}

.blank-wide { width: 72px; }
.blank { width: 45px; }

.refresh {
  height: 100%;
  margin-left: 3px;
  padding: 0 2px;
  border-left: 1px solid #ddd;
}

.search {
  width: 139px;
  height: 16px;
  display: flex;
  align-items: center;
  margin-left: 7px;
  padding: 0 5px;
  border: 1px solid #ddd;
}

.search input {
  flex: 1;
  min-width: 0;
}

.search input::placeholder {
  color: #777;
}

.commands {
  height: 20px;
  display: flex;
  align-items: center;
  gap: 19px;
  padding: 0 10px 1px 12px;
  background: #f5f6f7;
  border-bottom: 1px solid #e6e8ea;
  color: #1e3a6e;
}

.commands button {
  gap: 4px;
}

.commands .end {
  gap: 7px;
}

.files {
  flex: 1;
  min-height: 0;
  display: flex;
}

.places {
  width: 109px;
  padding: 11px 2px 0 0;
  border-right: 1px solid #f4f4f4;
}

.places ul {
  height: 115px;
  display: grid;
  grid-auto-rows: 1fr;
}

.places li {
  display: flex;
  align-items: center;
  gap: 3px;
  padding: 0 1px 0 21px;
  white-space: nowrap;
}

.places li span {
  flex: 1;
  width: 0;
  overflow: hidden;
}

.places li.root {
  padding-left: 17px;
}

.places .on {
  background: #d9d9d9;
}

.pin {
  width: 8px;
  height: 8px;
}

.pc {
  display: flex;
  align-items: center;
  gap: 3px;
  margin-top: 7px;
  padding-left: 16px;
}

.listing {
  position: relative;
  padding-left: 10px;
}

.sort {
  position: absolute;
  left: 93px;
  top: -1px;
  width: 6px;
  height: 6px;
  color: #777;
}

table {
  table-layout: fixed;
  width: 393px;
  border-collapse: collapse;
}

.c-name { width: 175px; }
.c-date { width: 82px; }
.c-type { width: 82px; }
.c-size { width: 54px; }

th {
  height: 21px;
  padding: 0;
  vertical-align: top;
  text-align: left;
  font-weight: 400;
  color: #5b6d8c;
}

th div {
  height: 17px;
  padding: 3px 0 0 4px;
  border-right: 1px solid #e8e8e8;
}

th.c-name div {
  padding-left: 2px;
}

tr:nth-child(even) td {
  height: 15px;
}

td {
  height: 14px;
  padding: 0 0 0 4px;
  line-height: 14px;
  color: #777;
  white-space: nowrap;
}

td:first-child {
  display: flex;
  align-items: center;
  gap: 2px;
  padding-left: 2px;
  color: #222;
}

td:last-child {
  padding-right: 5px;
  text-align: right;
}

.picked {
  background: #d9d9d9;
}

.selected {
  background: #cce8ff;
  outline: 1px solid #99d1ff;
  outline-offset: -1px;
}

.save-form {
  height: 79px;
  display: grid;
  grid-template-columns: 81px 1fr;
  grid-template-rows: 16px 15px 1fr;
  gap: 1px 4px;
  padding: 7px 8px 7px 0;
  background: #f0f0f0;
}

.save-form label {
  text-align: right;
  line-height: 16px;
}

.save-form input {
  background: #fff;
  border: 1px solid #a5a5a5;
}

.save-form select {
  padding: 0 1px;
  background: #e3e3e3;
  border: 1px solid #bbb;
}

.hide-folders {
  grid-column: 1 / 3;
  align-self: end;
  gap: 5px;
  height: 16px;
  padding-left: 8px;
}

.explorer {
  left: 599px;
  top: 342px;
  width: 736px;
  height: 521px;
  border: 1px solid #b9d0e8;
}

.exp-title {
  height: 20px;
  display: flex;
  align-items: center;
  gap: 4px;
  padding-left: 5px;
}

.exp-title .bar {
  margin-right: 2px;
}

.bar {
  width: 1px;
  height: 8px;
  background: #999;
}

.qat {
  width: 5px;
  height: 5px;
  border-top: 1px solid #222;
}

.ribbon {
  height: 17px;
  display: flex;
  align-items: center;
  gap: 18px;
  padding-right: 3px;
  border-bottom: 1px solid #e0e3e6;
  color: #555;
}

.ribbon .file {
  width: 38px;
  height: 16px;
  justify-content: center;
  margin-right: -8px;
  background: #2b7cd3;
  color: #fff;
}

.ribbon .end {
  color: #aaa;
}

.ribbon .ribbon-help {
  margin-left: -10px;
}

.explorer .nav-row {
  height: 23px;
}

.explorer .search {
  width: 104px;
}

.status {
  height: 17px;
  display: flex;
  align-items: center;
  gap: 14px;
  padding: 0 5px 0 9px;
  color: #1e3a6e;
}

.status .view-on {
  width: 16px;
  height: 16px;
  margin-right: -12px;
  justify-content: center;
  background: #cdeaf8;
  border: 1px solid #6fc1e6;
}

/* context menu */

.context-menu {
  position: absolute;
  left: 759px;
  top: 432px;
  width: 168px;
  padding: 2px 1px;
  background: #f2f2f2;
  border: 1px solid #a5a5a5;
}

.context-menu button {
  position: relative;
  width: 100%;
  height: 15px;
  padding-left: 22px;
}

.context-menu .default {
  font-weight: 700;
}

.context-menu .hover {
  background: #dadada;
}

.context-menu hr {
  height: 1px;
  margin: 2px 6px;
  border: none;
  background: #aaa;
}

.more {
  width: 10px;
  height: 10px;
  margin-left: auto;
  margin-right: 4px;
}

.menu-icon {
  position: absolute;
  left: 6px;
  top: 2px;
  width: 11px;
  height: 11px;
}
```
